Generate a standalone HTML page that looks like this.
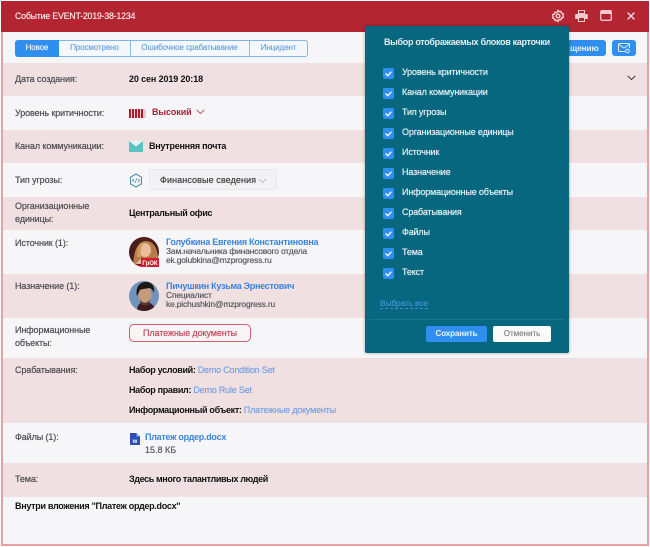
<!DOCTYPE html>
<html lang="ru"><head><meta charset="utf-8"><title>Событие</title>
<style>
html,body{margin:0;padding:0;background:#fff}
#p{position:relative;width:650px;height:547px;overflow:hidden;background:#fff;font-family:"Liberation Sans",sans-serif;font-size:9px;color:#111}
#f{position:absolute;left:1px;top:1px;width:648px;height:545px;background:#e9a0a5}
.b{position:absolute;left:3px;right:3px}
.pk{background:#f0e0e1}.wh{background:#f6f6f8}
.t{position:absolute;white-space:nowrap;line-height:12px;text-shadow:0 0 .5px currentColor}
.l{color:#505055;left:15px;letter-spacing:-.1px}
.v{font-weight:bold;left:129px;letter-spacing:-.32px;text-shadow:none}
.a{color:#3b84dc;font-weight:bold;letter-spacing:-.28px;text-shadow:none}
.g{color:#5c5c62;font-size:8.5px;letter-spacing:-.2px}
.q{color:#7ba2e0;font-weight:normal;letter-spacing:-.2px;text-shadow:0 0 .5px currentColor}
.tb{font-size:8px;letter-spacing:-.1px;color:#6fa6e0}
.cb{position:absolute;left:383px;width:11px;height:11px;border-radius:2px;background:#2f8ff0}
.cb svg{position:absolute;left:0;top:0}
.c{position:absolute;left:402px;color:#e2edf0;white-space:nowrap;line-height:12px;letter-spacing:-.15px;text-shadow:0 0 .6px #e2edf0}
</style></head><body><div id="p">
<div id="f"></div>
<div class="b" style="top:1px;height:31px;background:#b42532;left:1px;right:1px"></div>
<div class="b wh" style="top:32px;height:31px"></div>
<div class="b pk" style="top:63px;height:33px"></div>
<div class="b wh" style="top:96px;height:34px"></div>
<div class="b pk" style="top:130px;height:33px"></div>
<div class="b wh" style="top:163px;height:34px"></div>
<div class="b pk" style="top:197px;height:33px"></div>
<div class="b wh" style="top:230px;height:44px"></div>
<div class="b pk" style="top:274px;height:44px"></div>
<div class="b wh" style="top:318px;height:40px"></div>
<div class="b pk" style="top:358px;height:65px"></div>
<div class="b wh" style="top:423px;height:40px"></div>
<div class="b pk" style="top:463px;height:34px"></div>
<div class="b wh" style="top:497px;height:47px"></div>

<div class="t" style="left:15px;top:10px;color:#f7e6e7;letter-spacing:-.2px;font-size:8.8px">Событие EVENT-2019-38-1234</div>

<svg style="position:absolute;left:551px;top:9px" width="14" height="14" viewBox="0 0 14 14" fill="none" stroke="#f5c9cd" stroke-width="1.5"><path d="M7 1.500l1.200 1.300 1.800-.3.6 1.700 1.700.7-.4 1.800.4 1.600-1.700.7-.6 1.700-1.800-.3L7 12.500l-1.200-1.300-1.800.3-.6-1.700-1.700-.7.4-1.600-.4-1.800 1.700-.7.6-1.700 1.800.3z"/><circle cx="7" cy="7" r="1.800"/></svg>
<svg style="position:absolute;left:575px;top:10px" width="13" height="12" viewBox="0 0 13 12"><path d="M3.500.500h6v3h-6z" fill="none" stroke="#f5c9cd"/><path d="M1 4h11a.8.8 0 0 1 .8.8V9H10V7H3v2H.2V4.800A.8.8 0 0 1 1 4z" fill="#f5c9cd"/><path d="M3.500 7.500h6v4h-6z" fill="none" stroke="#f5c9cd"/></svg>
<svg style="position:absolute;left:600px;top:10px" width="12" height="11" viewBox="0 0 12 11"><rect x=".7" y=".7" width="10.600" height="9.600" rx="1.300" fill="none" stroke="#f5c9cd" stroke-width="1.300"/><rect x="1" y="1" width="10" height="3" fill="#f5c9cd"/></svg>
<svg style="position:absolute;left:627px;top:12px" width="8" height="8" viewBox="0 0 8 8"><path d="M.6.600l6.800 6.800M7.400.600L.6 7.400" stroke="#f5dcde" stroke-width="1.400"/></svg>

<div style="position:absolute;left:15px;top:40px;width:291px;height:15px;border:1px solid #7fb6ee;border-radius:3px;background:#f4f8fc"></div>
<div style="position:absolute;left:15px;top:40px;width:44px;height:17px;background:#2f8ff0;border-radius:3px 0 0 3px"></div>
<div class="t tb" style="left:15px;top:42px;width:44px;text-align:center;color:#e9f3fd">Новое</div>
<div class="t tb" style="left:59px;top:42px;width:71px;text-align:center">Просмотрено</div>
<div class="t tb" style="left:130px;top:42px;width:119px;text-align:center">Ошибочное срабатывание</div>
<div class="t tb" style="left:249px;top:42px;width:59px;text-align:center">Инцидент</div>
<div style="position:absolute;left:130px;top:41px;width:1px;height:15px;background:#8dbcee"></div>
<div style="position:absolute;left:249px;top:41px;width:1px;height:15px;background:#8dbcee"></div>

<div style="position:absolute;left:545px;top:40px;width:61px;height:16px;background:#2f8ff0;border-radius:3px"></div>
<div class="t" style="left:570px;top:42px;color:#e6f1fc;font-size:8.5px;font-weight:bold;letter-spacing:-.2px;text-shadow:none">щению</div>
<div style="position:absolute;left:612px;top:40px;width:24px;height:16px;background:#2f8ff0;border-radius:3px"></div>
<svg style="position:absolute;left:618px;top:43px" width="13" height="11" viewBox="0 0 13 11" fill="none" stroke="#dfeefc"><path d="M7 8.500H1.500a1 1 0 0 1-1-1v-6a1 1 0 0 1 1-1h9a1 1 0 0 1 1 1V5"/><path d="M.8 1.500L6 5l5.200-3.500"/><circle cx="9.500" cy="8" r="1.800"/></svg>

<div class="t l" style="top:73px">Дата создания:</div>
<div class="t v" style="top:73px;letter-spacing:-.12px">20 сен 2019 20:18</div>
<svg style="position:absolute;left:627px;top:75px" width="9" height="6" viewBox="0 0 9 6"><path d="M.7.800L4.500 4.600 8.300.800" fill="none" stroke="#333" stroke-width="1"/></svg>

<div class="t l" style="top:107px">Уровень критичности:</div>
<div style="position:absolute;left:129px;top:109px;width:15px;height:9px;background:repeating-linear-gradient(90deg,#b01c2e 0 2px,#f0d0d4 2px 3px)"></div>
<div style="position:absolute;left:144px;top:109px;width:2px;height:9px;background:#d9d0d2"></div>
<div class="t" style="left:152px;top:106px;color:#a81f35;font-weight:bold;letter-spacing:-.1px;text-shadow:none">Высокий</div>
<svg style="position:absolute;left:196px;top:109px" width="9" height="6" viewBox="0 0 9 6"><path d="M.7.800L4.500 4.600 8.300.800" fill="none" stroke="#c0505f" stroke-width="1"/></svg>

<div class="t l" style="top:140px">Канал коммуникации:</div>
<svg style="position:absolute;left:129px;top:141px" width="14" height="11" viewBox="0 0 14 11"><rect width="14" height="11" fill="#5cc3c4"/><path d="M0 0l7 5.500L14 0z" fill="#e6f6f5"/></svg>
<div class="t v" style="left:149px;top:140px;letter-spacing:-.25px">Внутренняя почта</div>

<div class="t l" style="top:174px">Тип угрозы:</div>
<svg style="position:absolute;left:129px;top:173px" width="14" height="15" viewBox="0 0 14 15" fill="none"><path d="M7 1l5.500 3.200v6.600L7 14l-5.500-3.200V4.200z" stroke="#4d8ea3" stroke-width="1.100"/><path d="M5 5.800L3.500 7.500 5 9.200M9 5.800l1.500 1.700L9 9.200M7.800 5.300L6.200 9.700" stroke="#4d8ea3" stroke-width=".8"/></svg>
<div style="position:absolute;left:149px;top:169px;width:128px;height:21px;box-sizing:border-box;background:#f2f2f4;border:1px solid #e8e8ea;border-radius:3px"></div>
<div class="t" style="left:160px;top:174px;color:#444;letter-spacing:.1px">Финансовые сведения</div>
<svg style="position:absolute;left:258px;top:178px" width="9" height="6" viewBox="0 0 9 6"><path d="M.7.800L4.500 4.600 8.300.800" fill="none" stroke="#bbb" stroke-width="1"/></svg>

<div class="t l" style="top:200px">Организационные</div>
<div class="t l" style="top:213px">единицы:</div>
<div class="t v" style="top:207px">Центральный офис</div>

<div class="t l" style="top:237px">Источник (1):</div>
<svg style="position:absolute;left:129px;top:237px" width="31" height="31" viewBox="0 0 31 31"><defs><clipPath id="c1"><circle cx="15" cy="15" r="15"/></clipPath></defs><g clip-path="url(#c1)"><rect width="31" height="31" fill="#4a1d1c"/><path d="M4 31C4 14 9 4 17 4s12 9 12 17l2 10z" fill="#b57c4a"/><ellipse cx="16" cy="13" rx="6" ry="7" fill="#eabd9c"/><path d="M6 31c1-7 6-11 11-10s9 5 9 10z" fill="#e8b593"/><path d="M8 20C7 10 11 5 15 6c-3 3-4 8-3 14z" fill="#d29c5f"/><path d="M0 27h31v4H0z" fill="#8c1420"/></g><rect x="12" y="21" width="18" height="9" fill="#d01f30"/><text x="21" y="28" font-size="6" font-weight="bold" fill="#fff" text-anchor="middle" font-family="Liberation Sans">ГрОК</text></svg>
<div class="t a" style="left:166px;top:236px">Голубкина Евгения Константиновна</div>
<div class="t g" style="left:166px;top:245px">Зам.начальника финансового отдела</div>
<div class="t g" style="left:166px;top:254px">ek.golubkina@mzprogress.ru</div>

<div class="t l" style="top:280px">Назначение (1):</div>
<svg style="position:absolute;left:129px;top:281px" width="30" height="30" viewBox="0 0 30 30"><defs><clipPath id="c2"><circle cx="15" cy="15" r="15"/></clipPath></defs><g clip-path="url(#c2)"><rect width="30" height="30" fill="#6f93bb"/><path d="M8 30c0-6 3-9 8-9s10 3 10 9z" fill="#3c1a1e"/><ellipse cx="16" cy="14" rx="6.500" ry="9" fill="#c89a7c"/><path d="M8 15C6 6 11 1 17 1s9 4 8 11c-1-3-3-5-5-5-4 1-8 1-9 2-1 2-2 4-3 6z" fill="#1d1714"/><path d="M11 18c2 5 8 5 10 0l-1 5c-2 2-6 2-8 0z" fill="#54392f"/></g></svg>
<div class="t a" style="left:166px;top:280px">Пичушкин Кузьма Эрнестович</div>
<div class="t g" style="left:166px;top:289px">Специалист</div>
<div class="t g" style="left:166px;top:298px">ke.pichushkin@mzprogress.ru</div>

<div class="t l" style="top:324px">Информационные</div>
<div class="t l" style="top:337px">объекты:</div>
<div style="position:absolute;left:129px;top:324px;width:122px;height:18px;box-sizing:border-box;border:1px solid #d0606f;border-radius:5px;background:#f9f5f6"></div>
<div class="t" style="left:129px;top:327px;width:122px;text-align:center;color:#c64a5e;letter-spacing:-.1px">Платежные документы</div>

<div class="t l" style="top:364px">Срабатывания:</div>
<div class="t v" style="top:364px">Набор условий: <span class="q">Demo Condition Set</span></div>
<div class="t v" style="top:384px">Набор правил: <span class="q">Demo Rule Set</span></div>
<div class="t v" style="top:404px">Информационный объект: <span class="q">Платежные документы</span></div>

<div class="t l" style="top:431px">Файлы (1):</div>
<svg style="position:absolute;left:130px;top:433px" width="10" height="12" viewBox="0 0 10 12"><path d="M0 0h6.500L10 3.500V12H0z" fill="#2d4fb0"/><path d="M6.500 0v3.500H10z" fill="#9db0e2"/><text x="5" y="10" font-size="6" font-weight="bold" fill="#fff" text-anchor="middle" font-family="Liberation Sans">w</text></svg>
<div class="t a" style="left:145px;top:431px">Платеж ордер.docx</div>
<div class="t g" style="left:145px;top:444px;font-size:9px;letter-spacing:0">15.8 КБ</div>

<div class="t l" style="top:473px">Тема:</div>
<div class="t v" style="top:473px;letter-spacing:-.38px">Здесь много талантливых людей</div>

<div class="t" style="left:15px;top:500px;font-weight:bold;letter-spacing:-.3px;text-shadow:none">Внутри вложения "Платеж ордер.docx"</div>

<div style="position:absolute;left:365px;top:26px;width:204px;height:327px;background:#07677f;border-radius:2px;box-shadow:0 0 3px rgba(0,0,0,.35)"></div>
<div class="t" style="left:384px;top:36px;color:#e4eef1;font-weight:bold;letter-spacing:-.32px;text-shadow:none">Выбор отображаемых блоков карточки</div>

<div class="cb" style="top:68px"><svg width="11" height="11" viewBox="0 0 11 11"><path d="M2.500 5.500l2.200 2.200 3.800-4" fill="none" stroke="#fff" stroke-width="1.300"/></svg></div><div class="c" style="top:66px">Уровень критичности</div>
<div class="cb" style="top:88px"><svg width="11" height="11" viewBox="0 0 11 11"><path d="M2.500 5.500l2.200 2.200 3.800-4" fill="none" stroke="#fff" stroke-width="1.300"/></svg></div><div class="c" style="top:86px">Канал коммуникации</div>
<div class="cb" style="top:108px"><svg width="11" height="11" viewBox="0 0 11 11"><path d="M2.500 5.500l2.200 2.200 3.800-4" fill="none" stroke="#fff" stroke-width="1.300"/></svg></div><div class="c" style="top:106px">Тип угрозы</div>
<div class="cb" style="top:128px"><svg width="11" height="11" viewBox="0 0 11 11"><path d="M2.500 5.500l2.200 2.200 3.800-4" fill="none" stroke="#fff" stroke-width="1.300"/></svg></div><div class="c" style="top:126px">Организационные единицы</div>
<div class="cb" style="top:148px"><svg width="11" height="11" viewBox="0 0 11 11"><path d="M2.500 5.500l2.200 2.200 3.800-4" fill="none" stroke="#fff" stroke-width="1.300"/></svg></div><div class="c" style="top:146px">Источник</div>
<div class="cb" style="top:168px"><svg width="11" height="11" viewBox="0 0 11 11"><path d="M2.500 5.500l2.200 2.200 3.800-4" fill="none" stroke="#fff" stroke-width="1.300"/></svg></div><div class="c" style="top:166px">Назначение</div>
<div class="cb" style="top:188px"><svg width="11" height="11" viewBox="0 0 11 11"><path d="M2.500 5.500l2.200 2.200 3.800-4" fill="none" stroke="#fff" stroke-width="1.300"/></svg></div><div class="c" style="top:186px">Информационные объекты</div>
<div class="cb" style="top:208px"><svg width="11" height="11" viewBox="0 0 11 11"><path d="M2.500 5.500l2.200 2.200 3.800-4" fill="none" stroke="#fff" stroke-width="1.300"/></svg></div><div class="c" style="top:206px">Срабатывания</div>
<div class="cb" style="top:228px"><svg width="11" height="11" viewBox="0 0 11 11"><path d="M2.500 5.500l2.200 2.200 3.800-4" fill="none" stroke="#fff" stroke-width="1.300"/></svg></div><div class="c" style="top:226px">Файлы</div>
<div class="cb" style="top:248px"><svg width="11" height="11" viewBox="0 0 11 11"><path d="M2.500 5.500l2.200 2.200 3.800-4" fill="none" stroke="#fff" stroke-width="1.300"/></svg></div><div class="c" style="top:246px">Тема</div>
<div class="cb" style="top:268px"><svg width="11" height="11" viewBox="0 0 11 11"><path d="M2.500 5.500l2.200 2.200 3.800-4" fill="none" stroke="#fff" stroke-width="1.300"/></svg></div><div class="c" style="top:266px">Текст</div>

<div class="t" style="left:380px;top:298px;color:#3f8fd0;border-bottom:1px dashed #3f8fd0;line-height:10px;font-size:8.5px;letter-spacing:-.2px">Выбрать все</div>
<div style="position:absolute;left:370px;top:319px;width:194px;height:1px;background:#1a7388"></div>
<div style="position:absolute;left:426px;top:326px;width:61px;height:16px;background:#2f8ff0;border-radius:2px"></div>
<div class="t" style="left:426px;top:328px;width:61px;text-align:center;color:#eaf4fd;font-size:8px;font-weight:bold;letter-spacing:-.1px;text-shadow:none">Сохранить</div>
<div style="position:absolute;left:493px;top:326px;width:58px;height:16px;background:#fafafa;border-radius:2px"></div>
<div class="t" style="left:493px;top:328px;width:58px;text-align:center;color:#888;font-size:8px">Отменить</div>
</div></body></html>
